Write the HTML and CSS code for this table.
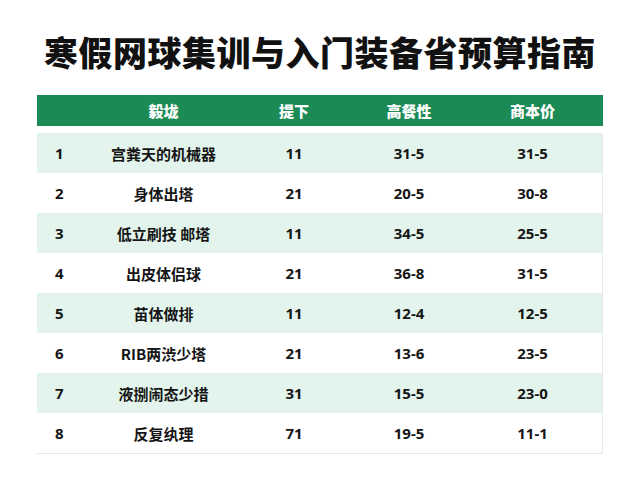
FILE: index.html
```html
<!DOCTYPE html>
<html lang="zh">
<head>
<meta charset="utf-8">
<link rel="stylesheet" href="styles.css">
</head>
<body>
<h1 class="title">寒假网球集训与入门装备省预算指南</h1>
<div class="table">
  <div class="head">
    <div class="c1"></div>
    <div class="c">毅垅</div>
    <div class="c">提下</div>
    <div class="c">高餐性</div>
    <div class="c">商本价</div>
  </div>
  <div class="body">
    <div class="row alt"><div class="c1">1</div><div class="c">宫粪天的机械器</div><div class="c">11</div><div class="c">31-5</div><div class="c">31-5</div></div>
    <div class="row"><div class="c1">2</div><div class="c">身体出塔</div><div class="c">21</div><div class="c">20-5</div><div class="c">30-8</div></div>
    <div class="row alt"><div class="c1">3</div><div class="c">低立刷技 邮塔</div><div class="c">11</div><div class="c">34-5</div><div class="c">25-5</div></div>
    <div class="row"><div class="c1">4</div><div class="c">出皮体侣球</div><div class="c">21</div><div class="c">36-8</div><div class="c">31-5</div></div>
    <div class="row alt"><div class="c1">5</div><div class="c">苗体做排</div><div class="c">11</div><div class="c">12-4</div><div class="c">12-5</div></div>
    <div class="row"><div class="c1">6</div><div class="c">RIB两渋少塔</div><div class="c">21</div><div class="c">13-6</div><div class="c">23-5</div></div>
    <div class="row alt"><div class="c1">7</div><div class="c">液捌闹态少措</div><div class="c">31</div><div class="c">15-5</div><div class="c">23-0</div></div>
    <div class="row"><div class="c1">8</div><div class="c">反复纨理</div><div class="c">71</div><div class="c">19-5</div><div class="c">11-1</div></div>
  </div>
</div>
</body>
</html>
```
FILE: styles.css
```css
html, body {
  margin: 0;
  padding: 0;
  background: #ffffff;
}
body {
  width: 640px;
  height: 480px;
  font-family: "Noto Sans", "Noto Sans CJK SC", sans-serif;
  color: #151515;
}
.title {
  margin: 0;
  padding-top: 31px;
  height: 42px;
  line-height: 42px;
  text-align: center;
  font-family: "Noto Sans CJK SC", sans-serif;
  font-size: 34px;
  font-weight: 900;
  color: #111111;
  letter-spacing: 0.5px;
}
.table {
  margin: 22px 0 0 37px;
  width: 566px;
}
.head, .row {
  display: grid;
  grid-template-columns: 58px 137px 124px 106px 141px;
  align-items: center;
}
.head {
  height: 31px;
  background: #1b8a55;
  color: #ffffff;
  font-family: "Noto Sans CJK SC", sans-serif;
  font-weight: 900;
  font-size: 15px;
}
.body {
  margin-top: 7px;
  border-right: 1px solid #e6e8e7;
  border-bottom: 1px solid #e6e8e7;
}
.row {
  height: 40px;
  font-size: 15px;
  font-weight: 700;
  font-family: "Noto Sans", "Noto Sans CJK SC", sans-serif;
}
.row .c:nth-child(2) {
  font-family: "Noto Sans CJK SC", sans-serif;
}
.alt {
  background: #e2f4ec;
}
.c1 {
  padding-left: 18px;
}
.c {
  text-align: center;
}
```
